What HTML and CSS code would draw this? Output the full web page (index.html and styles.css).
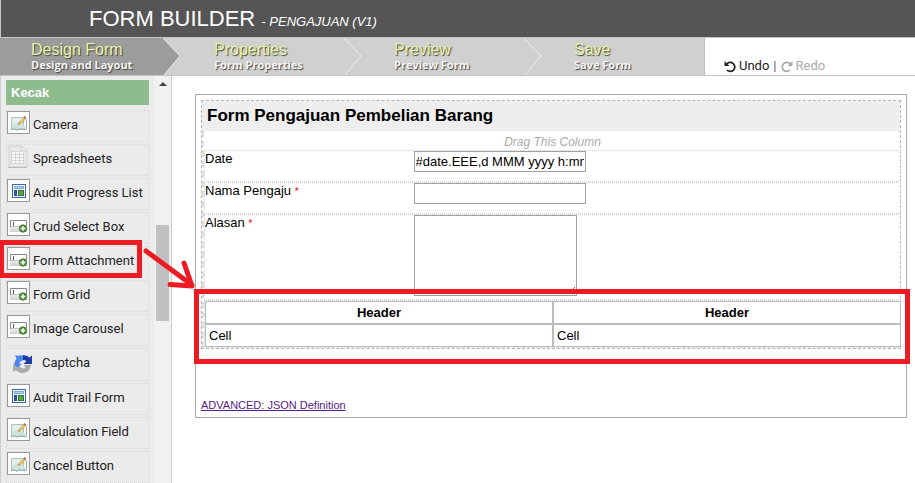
FILE: index.html
```
<!DOCTYPE html>
<html lang="en">
<head>
<meta charset="utf-8">
<title>Form Builder</title>
<link rel="stylesheet" href="styles.css">
</head>
<body>
<svg class="defs" aria-hidden="true">
  <defs>
    <g id="i-frame"><rect x=".5" y=".5" width="22" height="22" fill="#fdfdfd" stroke="#999"/></g>
    <g id="i-edit">
      <use href="#i-frame"/>
      <path d="M4.500 6.500h12v9l1 2.500-4 .5-2-1-2 1.500-2-1.500-3 1z" fill="#e4efec" stroke="#a9c4c0"/>
      <path d="M5 14l6-3 7 4v2l-6 .5L5 17z" fill="#cfe3de"/>
      <path d="M19.500 8.500v10M4 18.500l3-.5 3 1 3-1 6 .5" fill="none" stroke="#8fabab"/>
      <path d="M11 13.500l1.500-2.500 4.500-4.500 1.500 1.500-4.500 4.500z" fill="#f5cf55" stroke="#a08040" stroke-width=".6"/>
      <path d="M17 5.500l2 2" stroke="#a8604a" stroke-width="1.500"/>
    </g>
    <linearGradient id="g-field" x1="0" y1="0" x2="0" y2="1"><stop stop-color="#f2f2f2"/><stop offset="1" stop-color="#cfcfcf"/></linearGradient>
    <g id="i-add">
      <use href="#i-frame"/>
      <path d="M3 13h17v6H3z" fill="url(#g-field)"/>
      <path d="M3.500 14V7.500h16V13" fill="#fff" stroke="#888"/>
      <path d="M6.500 9v4" stroke="#555"/>
      <path d="M4 13.500h10" stroke="#c4c4c4"/>
      <circle cx="16" cy="15.500" r="3.700" fill="#549439" stroke="#35681f" stroke-width=".8"/>
      <path d="M16 13.200v4.600M13.700 15.500h4.600" stroke="#fff" stroke-width="1.500"/>
    </g>
    <g id="i-list">
      <use href="#i-frame"/>
      <rect x="5.500" y="5.500" width="13" height="13" fill="#fff" stroke="#3768ad"/>
      <rect x="7.500" y="7.500" width="9" height="2" fill="#b5d2f6" stroke="#7ca5dc"/>
      <rect x="7.500" y="11.500" width="2" height="5" fill="#2d5fb7" stroke="#244e97"/>
      <rect x="11.500" y="11.500" width="5" height="5" fill="#55a94c" stroke="#32762b"/>
    </g>
    <g id="i-sheet">
      <path d="M2 1h13l5 5v16H2z" fill="#e8e8e8" stroke="#d2d2d2"/>
      <path d="M15 1v5h5z" fill="#fafafa" stroke="#c5c5c5" stroke-width=".8"/>
      <path d="M4 6h13v13H4z" fill="#f8f8f8"/>
      <path d="M4 6.500h13M4 9.500h13M4 12.500h13M4 15.500h13M4 18.500h13M4.500 6v12M8.500 6v12M12.500 6v12M16.500 6v12" stroke="#cdcdcd" stroke-width=".8"/>
      <path d="M1 22.500h19" stroke="#bbb"/>
    </g>
    <g id="i-captcha">
      <path d="M2 1.500h8v5q-3 0-3.500 3l2 .5-4 4L0 9.500h1.500q0-2.500 2-5z" fill="#4a87ea"/>
      <path d="M10 1q4 0 6.500 2.500L19 1.500V10h-8.500l3-3Q12 6 10 6z" fill="#1e3ca8"/>
      <path d="M0 11h1.500l3 3 2-2q2 3.500 6 2l-1.500-3H18q-1 7.500-8.500 8-4 0-6.500-3l-3 2z" fill="#aaa"/>
    </g>
    <g id="i-turn">
      <path d="M2.800 4A4.500 4.500 0 1 1 3 10" fill="none" stroke="currentColor" stroke-width="1.800"/>
      <path d="M.5 1v5h5z" fill="currentColor"/>
    </g>
  </defs>
</svg>

<header class="top">
  <h1>FORM BUILDER <em>- PENGAJUAN (V1)</em></h1>
</header>

<nav class="nav">
  <a class="step active" href="#design"><b>Design Form</b><span>Design and Layout</span><svg class="chev" viewBox="0 0 18 37"><path class="fill" d="M0 0L17 18 1 37H0z"/><path class="line" d="M0 0L17 18 1 37"/></svg></a>
  <a class="step" href="#properties"><b>Properties</b><span>Form Properties</span><svg class="chev" viewBox="0 0 18 37"><path class="line" d="M0 0L17 18 1 37"/></svg></a>
  <a class="step" href="#preview"><b>Preview</b><span>Preview Form</span><svg class="chev" viewBox="0 0 18 37"><path class="line" d="M0 0L17 18 1 37"/></svg></a>
  <a class="step last" href="#save"><b>Save</b><span>Save Form</span></a>
  <div class="history">
    <button type="button"><svg viewBox="0 0 12 13"><use href="#i-turn"/></svg>Undo</button><i>|</i><button type="button" disabled><svg class="flip" viewBox="0 0 12 13"><use href="#i-turn"/></svg>Redo</button>
  </div>
</nav>

<div class="work">
  <aside class="side">
    <div class="palette">
      <h2>Kecak</h2>
      <ul>
        <li><svg viewBox="0 0 23 23"><use href="#i-edit"/></svg>Camera</li>
        <li><svg viewBox="0 0 23 23"><use href="#i-sheet"/></svg>Spreadsheets</li>
        <li><svg viewBox="0 0 23 23"><use href="#i-list"/></svg>Audit Progress List</li>
        <li><svg viewBox="0 0 23 23"><use href="#i-add"/></svg>Crud Select Box</li>
        <li><svg viewBox="0 0 23 23"><use href="#i-add"/></svg>Form Attachment</li>
        <li><svg viewBox="0 0 23 23"><use href="#i-add"/></svg>Form Grid</li>
        <li><svg viewBox="0 0 23 23"><use href="#i-add"/></svg>Image Carousel</li>
        <li class="captcha"><svg viewBox="0 0 20 20"><use href="#i-captcha"/></svg>Captcha</li>
        <li><svg viewBox="0 0 23 23"><use href="#i-list"/></svg>Audit Trail Form</li>
        <li><svg viewBox="0 0 23 23"><use href="#i-edit"/></svg>Calculation Field</li>
        <li><svg viewBox="0 0 23 23"><use href="#i-edit"/></svg>Cancel Button</li>
      </ul>
    </div>
    <div class="scroll"><span class="up"></span><span class="thumb"></span></div>
  </aside>

  <main class="canvas">
    <div class="form">
      <section class="section">
        <h3>Form Pengajuan Pembelian Barang</h3>
        <div class="column">
          <p class="drag">Drag This Column</p>
          <div class="field"><label for="date">Date</label><input id="date" type="text" value="#date.EEE,d MMM yyyy h:mm#"></div>
          <div class="field"><label for="nama">Nama Pengaju <span>*</span></label><input id="nama" type="text"></div>
          <div class="field tall"><label for="alasan">Alasan <span>*</span></label><textarea id="alasan"></textarea></div>
          <div class="grid">
            <table>
              <thead><tr><th>Header</th><th>Header</th></tr></thead>
              <tbody><tr><td>Cell</td><td>Cell</td></tr></tbody>
            </table>
          </div>
        </div>
      </section>
      <a class="advanced" href="#json">ADVANCED: JSON Definition</a>
    </div>
  </main>
</div>

<svg class="marks" viewBox="0 0 915 483" aria-hidden="true">
  <rect x="1.500" y="242.500" width="138" height="33"/>
  <rect x="196.500" y="291.500" width="711" height="70"/>
  <path d="M146 251L192 285M184 263L192 286 170 284.500" stroke-linecap="round" stroke-linejoin="round"/>
</svg>
</body>
</html>
```

FILE: styles.css
```
* { box-sizing: border-box; }
body {
  margin: 0;
  height: 100vh;
  overflow: hidden;
  display: flex;
  flex-direction: column;
  position: relative;
  background: #fff;
  color: #000;
  font: 13px/16px "Liberation Sans", Arial, sans-serif;
}
h1, h2, h3, p, ul { margin: 0; padding: 0; }
.defs { position: absolute; width: 0; height: 0; }

.top {
  flex: none;
  height: 38px;
  padding-left: 88px;
  background: #555;
  border-bottom: 1px solid #c4c4c4;
  border-left: 1px solid #c4c4c4;
}
.top h1 { font-size: 22px; line-height: 37px; font-weight: normal; color: #fff; }
.top em { font-size: 13px; }

.nav {
  flex: none;
  display: flex;
  height: 38px;
  border-bottom: 1px solid #c4c4c4;
}
.step {
  position: relative;
  width: 180px;
  padding: 3px 0 0 34px;
  background: #d0d0d0;
  color: #fff;
  text-decoration: none;
  text-shadow: 1px 1px 1px #444;
}
.step b { display: block; font-size: 16px; line-height: 17px; font-weight: normal; color: #e5f5a5; }
.step span { display: block; font: bold 11px/14px "Open Sans", sans-serif; color: #f5f5f5; }
.step.active { width: 163px; padding-left: 31px; background: #9c9c9c; }
.step.active + .step { width: 197px; padding-left: 51px; }
.step.last { width: 165px; border-right: 1px solid #bbb; }
.chev { position: absolute; top: 0; right: -2px; width: 18px; height: 37px; z-index: 1; }
.active .chev { right: -18px; }
.chev .fill { fill: #9c9c9c; }
.chev .line { fill: none; stroke: #ececec; }

.history { display: flex; align-items: flex-end; padding: 0 0 1px 19px; font: 13px/16px Roboto, sans-serif; }
.history button {
  display: flex;
  align-items: center;
  gap: 3px;
  padding: 0;
  border: 0;
  background: none;
  font: inherit;
  color: #222;
}
.history button:disabled { color: #aaa; }
.history svg { width: 12px; height: 13px; }
.history i { margin: 0 4px; font-style: normal; color: #555; }
.flip { transform: scaleX(-1); }

.work { flex: 1; min-height: 0; display: flex; }
.side { flex: none; width: 172px; display: flex; border: solid #ccc; border-width: 0 1px; background: #ebebeb; }
.palette { flex: 1; overflow: hidden; padding: 4px 5px; }
.palette h2 { padding: 0 5px; font-size: 13px; line-height: 25px; color: #fff; background: #8fbc8f; }
.palette ul { list-style: none; display: flex; flex-direction: column; gap: 2px; margin-top: 5px; }
.palette li {
  display: flex;
  gap: 3px;
  height: 32px;
  border: 1px dotted #d8d8d8;
  font: 13px/27px Roboto, sans-serif;
  color: #222;
}
.palette svg { width: 23px; height: 23px; }
.palette .captcha { height: 33px; padding-left: 6px; gap: 9px; }
.palette .captcha svg { width: 20px; height: 20px; margin-top: 5px; }
.scroll { width: 17px; display: flex; flex-direction: column; align-items: center; background: #f1f1f1; }
.up { margin-top: 6px; border: solid transparent; border-width: 0 4px 4px; border-bottom-color: #444; }
.thumb { width: 13px; height: 96px; margin-top: 139px; background: #c1c1c1; }

.canvas { flex: 1; padding: 18px 8px 0 23px; }
.form { padding: 5px; border: 1px solid #aaa; }
.section { border: 1px dashed #b5b5b5; }
.section h3 { padding-left: 5px; font-size: 17px; line-height: 30px; background: #eee; }
.column { margin-right: -1px; border-left: 2px dashed #ddd; }
.drag { padding-top: 4px; font-size: 12px; line-height: 15px; text-align: center; font-style: italic; color: #aaa; }
.field { display: flex; height: 32px; border: 1px dotted #d3d3d3; }
.field.tall { height: 86px; }
.field label { width: 30%; }
.field label span { font-size: 10px; color: #f00; }
.field input, .field textarea {
  margin: 0;
  padding: 1px;
  border: 1px solid #a0a0a0;
  border-radius: 0;
  background: #fff;
  font: 13px/16px "Liberation Sans", Arial, sans-serif;
}
.field input { width: 172px; height: 21px; }
.field textarea { width: 163px; height: 81px; }
.grid { border: 1px dotted #d3d3d3; border-right: 0; }
.grid table { width: 100%; border-collapse: separate; border-spacing: 0; table-layout: fixed; }
.grid th, .grid td { height: 23px; padding: 0 3px; border: 1px solid #bbb; text-align: left; }
.grid th { text-align: center; }
.advanced { display: block; width: fit-content; margin-top: 49px; font-size: 11px; line-height: 14px; color: #551a8b; }

.marks { position: absolute; top: 0; left: 0; width: 915px; height: 483px; pointer-events: none; }
.marks rect, .marks path { fill: none; stroke: #ed1c24; stroke-width: 5; }
```
